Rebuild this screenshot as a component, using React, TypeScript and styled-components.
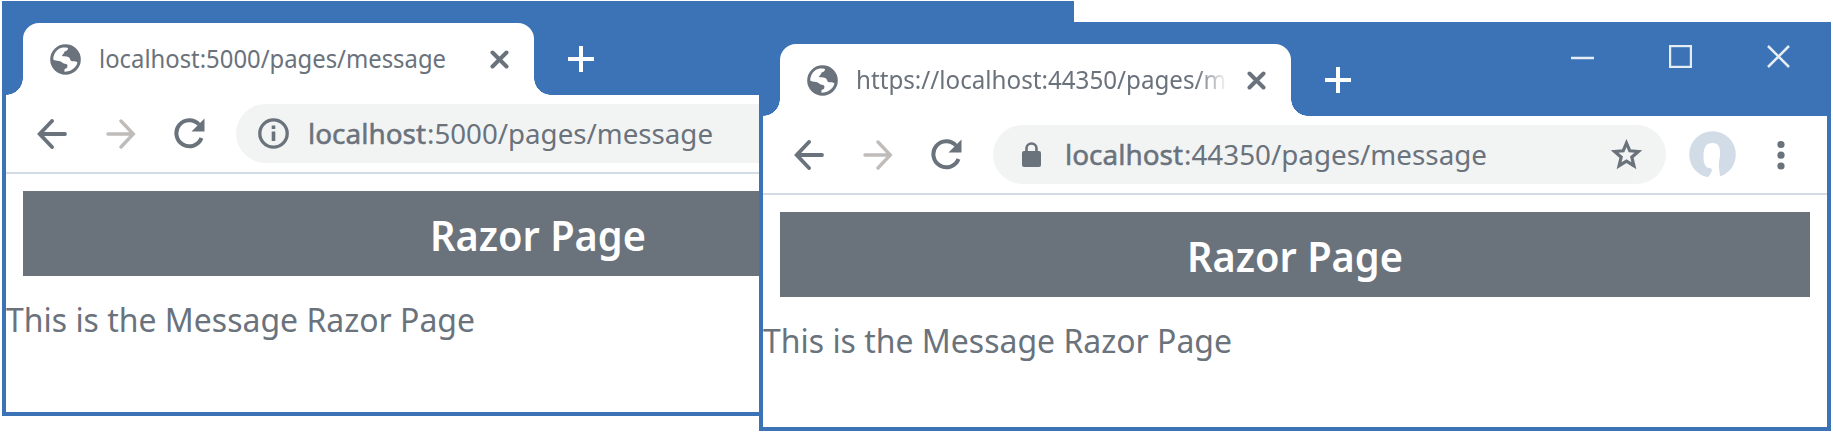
import React from "react";
import styled, { createGlobalStyle } from "styled-components";

const blue = "#3b73b6";
const ink = "#6a727c";

const Global = createGlobalStyle`
  * { box-sizing: border-box; }
  body { margin: 0; background: #fff; font-family: "Noto Sans", "Open Sans", sans-serif; color: ${ink}; }
`;

const Desktop = styled.div`
  position: relative;
  width: 1833px;
  height: 433px;
  overflow: hidden;
`;

const Window = styled.section<{ $x: number; $y: number; $h: number }>`
  position: absolute;
  left: ${(p) => p.$x}px;
  top: ${(p) => p.$y}px;
  width: 1072px;
  height: ${(p) => p.$h}px;
  display: flex;
  flex-direction: column;
  background: #fff;
  border: 4px solid ${blue};
  border-top: 0;
`;

const TitleBar = styled.header`
  height: 94px;
  flex: none;
  display: flex;
  align-items: flex-end;
  background: ${blue};
`;

const TabShape = styled.div`
  position: relative;
  width: 510.5px;
  height: 72px;
  margin-left: 17px;
  padding: 0 0 0 27px;
  display: flex;
  align-items: center;
  background: #fff;
  border-radius: 16px 16px 0 0;
  &::before, &::after {
    content: "";
    position: absolute;
    bottom: 0;
    width: 17px;
    height: 17px;
  }
  &::before { right: 100%; background: radial-gradient(circle at 0 0, transparent 16.5px, #fff 17px); }
  &::after { left: 100%; background: radial-gradient(circle at 100% 0, transparent 16.5px, #fff 17px); }
`;

const TabTitle = styled.div<{ $fade?: boolean }>`
  width: 374px;
  height: 40px;
  margin-left: 18px;
  overflow: hidden;
  white-space: nowrap;
  ${(p) => p.$fade && "mask-image: linear-gradient(90deg, #000 340px, transparent 372px);"}
`;

const Line = styled.svg`
  display: block;
  overflow: visible;
  width: 100%;
  height: 100%;
`;

const Icon = styled.svg<{ $w: number; $h?: number; $ml?: number }>`
  flex: none;
  display: block;
  width: ${(p) => p.$w}px;
  height: ${(p) => p.$h ?? p.$w}px;
  margin-left: ${(p) => p.$ml ?? 0}px;
`;

const NewTab = styled.div`
  height: 72px;
  margin-left: 34px;
  display: flex;
  align-items: center;
`;

const Controls = styled.div`
  align-self: flex-start;
  display: flex;
  align-items: center;
  gap: 75px;
  margin: 23px 37px 0 auto;
`;

const Toolbar = styled.div`
  height: 79px;
  flex: none;
  display: flex;
  align-items: center;
  border-bottom: 2px solid #d3dce5;
`;

const Address = styled.div`
  width: 673px;
  height: 59px;
  margin-left: 31px;
  padding-right: 24px;
  display: flex;
  align-items: center;
  background: #f2f4f4;
  border-radius: 30px;
`;

const Url = styled.div`
  flex: 1;
  height: 40px;
`;

const Banner = styled.h1`
  height: 85px;
  flex: none;
  margin: 17px 17px 0;
  background: ${ink};
`;

const Message = styled.p`
  height: 50px;
  margin: 20px 0 0;
`;

type FitProps = { width: number; size: number; baseline: number; x?: number; weight?: number; fill?: string; children: React.ReactNode };

function Fit({ width, size, baseline, x = 0, weight = 400, fill = ink, children }: FitProps) {
  return (
    <Line>
      <text x={x} y={baseline} textLength={width} lengthAdjust="spacingAndGlyphs" fontSize={size} fontWeight={weight} fill={fill}>
        {children}
      </text>
    </Line>
  );
}

const Globe = () => (
  <Icon $w={31} viewBox="0 0 31 31">
    <circle cx="15.5" cy="15.5" r="15.3" fill={ink} />
    <path d="M8 5.500C11 3.500 14 3.200 18 4C18 6 17 7 14.500 7.500C14.500 9.500 12.500 10 12 12C14 12.500 18 12 19.500 14C20.500 15.500 20 17 22 17.200C25 17 26.500 17.500 27.500 18.500C26 24 21 27.500 14.500 27.800C14 25.500 14.500 24.500 17 24C17.500 22 18 20.500 16 20C12.500 19.500 11.500 17.500 9 17C6.500 16.500 4 16.500 3.200 15.500C3.300 11.500 4.800 8 8 5.500Z" fill="#fff" />
  </Icon>
);

const Back = () => (
  <Icon $w={30} $ml={31} viewBox="0 0 30 30" fill="none" stroke={ink} strokeWidth="3.8" strokeLinecap="round">
    <path d="M28 15H3M15 2L2.700 15L15 28" />
  </Icon>
);

const Forward = () => (
  <Icon $w={30} $ml={39} viewBox="0 0 30 30" fill="none" stroke="#c0bcba" strokeWidth="3.4" strokeLinecap="round">
    <path d="M2 15H27M15 2L27.300 15L15 28" />
  </Icon>
);

const Reload = () => (
  <Icon $w={31} $ml={38} viewBox="0 0 31 31">
    <path d="M27.500 20A13 13 0 1 1 25 6.500" fill="none" stroke={ink} strokeWidth="4" />
    <path d="M30.500 0.500V13.500H17.500Z" fill={ink} />
  </Icon>
);

const Info = () => (
  <Icon $w={31} $ml={22} viewBox="0 0 31 31">
    <circle cx="15.500" cy="15.500" r="13.700" fill="none" stroke={ink} strokeWidth="3.300" />
    <path d="M15.500 13.500V23M15.500 7.500V11" stroke={ink} strokeWidth="3.600" />
  </Icon>
);

const Lock = () => (
  <Icon $w={20} $h={26} $ml={29} viewBox="0 0 20 26">
    <path d="M4.500 10V6.500a5 5 0 0 1 10 0V10" fill="none" stroke={ink} strokeWidth="2.600" />
    <rect y="9" width="19" height="16" rx="2" fill={ink} />
  </Icon>
);

const Star = () => (
  <Icon $w={31} viewBox="0 0 31 31" fill="none" stroke={ink} strokeWidth="3.2">
    <path d="M15.500 4L18.800 11.800L27.500 12.500L20.800 18.200L22.900 26.700L15.500 22.100L8.100 26.700L10.200 18.200L3.500 12.500L12.200 11.800Z" />
  </Icon>
);

const Avatar = () => (
  <Icon $w={47} $ml={23} viewBox="0 0 47 47">
    <circle cx="23.500" cy="23.500" r="23.300" fill="#d2dce6" />
    <path d="M14.500 26C14.500 16 17 12 23.500 12S31.500 16 31 25C30 31 29 33 31.500 47H18C22 43 25 38 21 37C16 37 14.500 32 14.500 26Z" fill="#fff" />
  </Icon>
);

const Dots = () => (
  <Icon $w={8} $h={30} $ml={41} viewBox="0 0 8 30" fill={ink}>
    <circle cx="4" cy="4.5" r="3.600" /><circle cx="4" cy="15.200" r="3.600" /><circle cx="4" cy="26" r="3.600" />
  </Icon>
);

type BrowserProps = { x: number; y: number; h: number; title: string; titleWidth: number; port: string; portWidth: number; secure?: boolean };

function Browser({ x, y, h, title, titleWidth, port, portWidth, secure }: BrowserProps) {
  const hostX = secure ? 23 : 19;
  return (
    <Window $x={x} $y={y} $h={h}>
      <TitleBar>
        <TabShape>
          <Globe />
          <TabTitle $fade={secure}>
            <Fit width={titleWidth} size={25.5} baseline={28.5}>{title}</Fit>
          </TabTitle>
          <Icon $w={19} $ml={17} viewBox="0 0 19 19" stroke={ink} strokeWidth="4" strokeLinecap="round">
            <path d="M2.500 2.500L16.500 16.500M16.500 2.500L2.500 16.500" />
          </Icon>
        </TabShape>
        <NewTab>
          <Icon $w={26} viewBox="0 0 26 26" stroke="#fff" strokeWidth="4"><path d="M13 0V26M0 13H26" /></Icon>
        </NewTab>
        {secure && (
          <Controls>
            <Icon $w={23} viewBox="0 0 23 23" stroke="#e6edf5" strokeWidth="2.500"><path d="M0 13H23" /></Icon>
            <Icon $w={23} viewBox="0 0 23 23" fill="none" stroke="#e6edf5" strokeWidth="2.200"><rect x="1.100" y="1.100" width="20.800" height="20.800" /></Icon>
            <Icon $w={23} viewBox="0 0 23 23" stroke="#e6edf5" strokeWidth="2.500"><path d="M1 1L22 22M22 1L1 22" /></Icon>
          </Controls>
        )}
      </TitleBar>
      <Toolbar>
        <Back /><Forward /><Reload />
        <Address>
          {secure ? <Lock /> : <Info />}
          <Url>
            <Line>
              <text x={hostX} y="29.5" fontSize="28" fill={ink} stroke={ink} strokeWidth="0.500" textLength="118" lengthAdjust="spacingAndGlyphs">localhost</text>
              <text x={hostX + 119} y="29.5" fontSize="28" fill={ink} textLength={portWidth} lengthAdjust="spacingAndGlyphs">{port}</text>
            </Line>
          </Url>
          <Star />
        </Address>
        <Avatar /><Dots />
      </Toolbar>
      <Banner>
        <Fit x={407} width={216} size={41} baseline={60} weight={600} fill="#fff">Razor Page</Fit>
      </Banner>
      <Message>
        <Fit width={469} size={33.5} baseline={36}>This is the Message Razor Page</Fit>
      </Message>
    </Window>
  );
}

export default function App() {
  return (
    <>
      <Global />
      <Desktop>
        <Browser x={2} y={1} h={415} title="localhost:5000/pages/message" titleWidth={347} port=":5000/pages/message" portWidth={286} />
        <Browser x={759} y={22} h={409} title="https://localhost:44350/pages/message" titleWidth={449} port=":44350/pages/message" portWidth={303} secure />
      </Desktop>
    </>
  );
}
